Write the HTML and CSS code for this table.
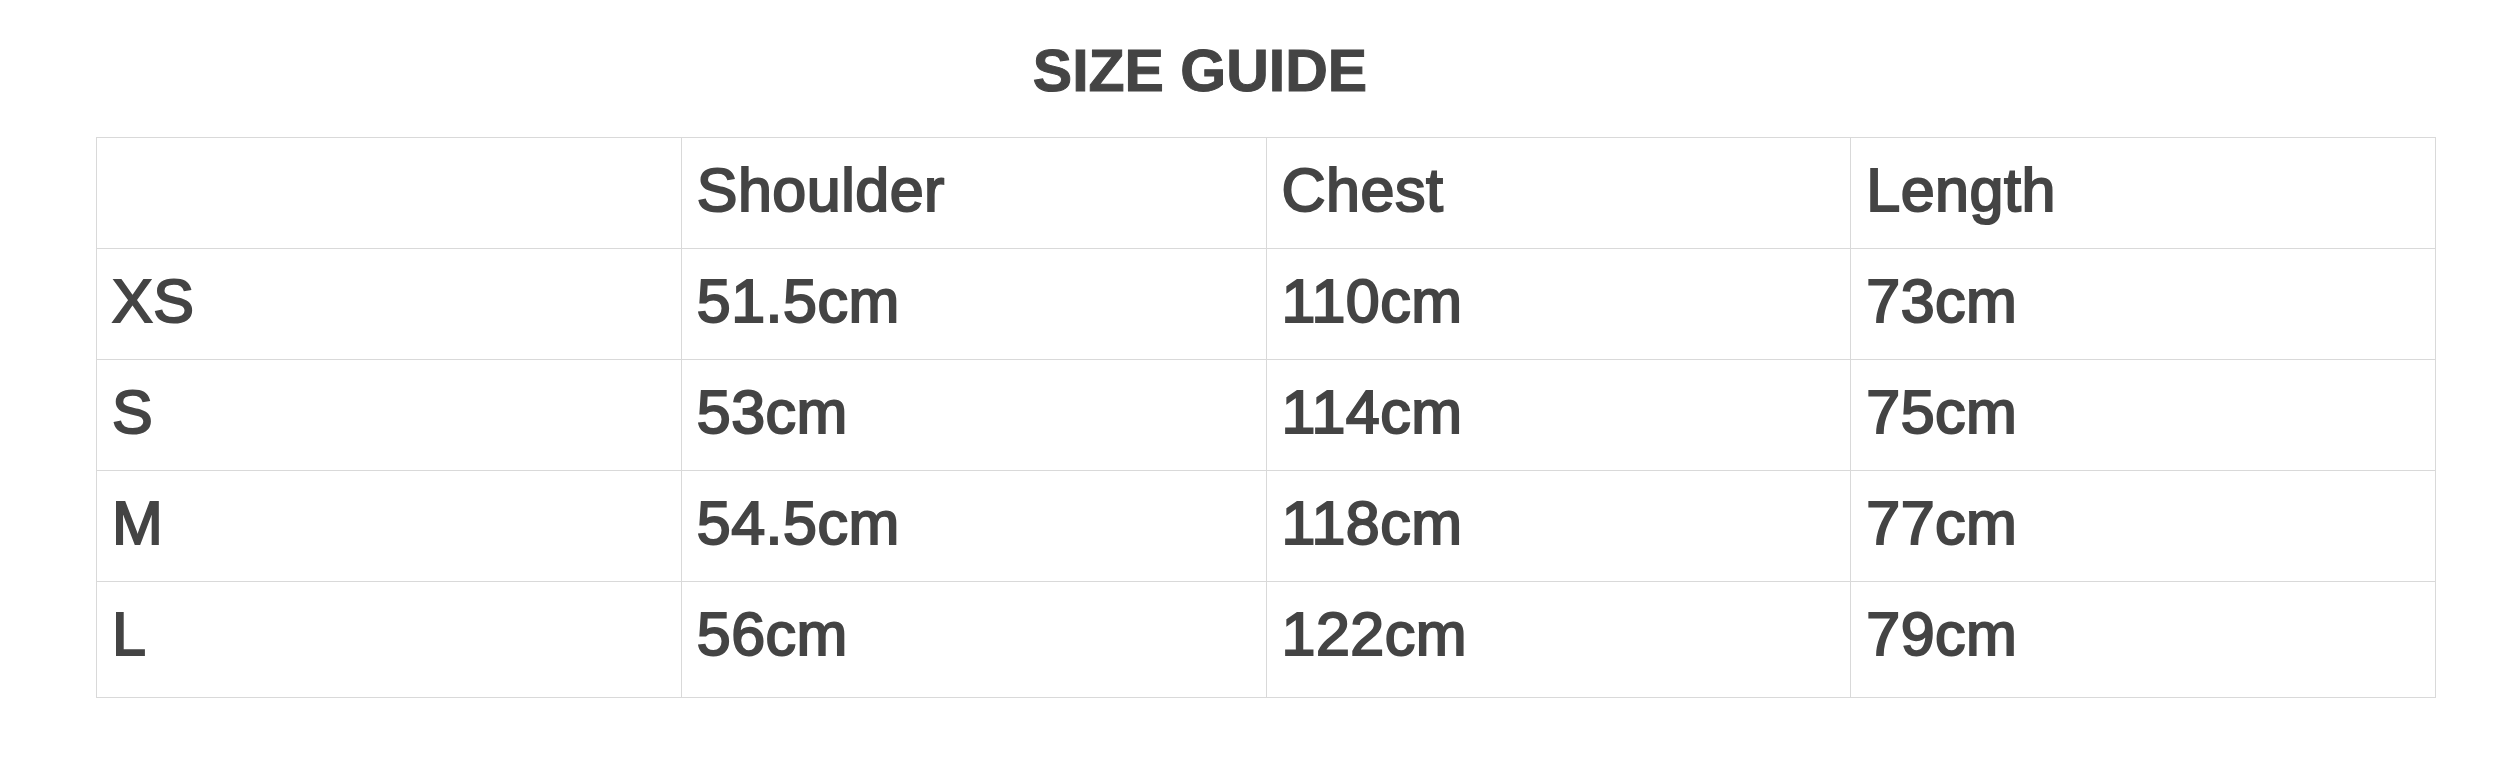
FILE: index.html
```html
<!DOCTYPE html>
<html lang="en">
<head>
<meta charset="utf-8">
<title>Size Guide</title>
<link rel="stylesheet" href="styles.css">
</head>
<body>
<div class="page">
  <h2 class="title">SIZE GUIDE</h2>
  <table class="sizes">
    <thead>
      <tr><th></th><th>Shoulder</th><th>Chest</th><th>Length</th></tr>
    </thead>
    <tbody>
      <tr><td>XS</td><td>51.5cm</td><td>110cm</td><td>73cm</td></tr>
      <tr><td>S</td><td>53cm</td><td>114cm</td><td>75cm</td></tr>
      <tr><td>M</td><td>54.5cm</td><td>118cm</td><td>77cm</td></tr>
      <tr class="last"><td>L</td><td>56cm</td><td>122cm</td><td>79cm</td></tr>
    </tbody>
  </table>
</div>
</body>
</html>
```

FILE: styles.css
```css
html, body {
  margin: 0;
  padding: 0;
  background: #ffffff;
}

.page {
  padding: 37px 79px 0 96px;
  font-family: "Liberation Sans", Arial, Helvetica, sans-serif;
  color: #444444;
}

.title {
  margin: 0 0 32px 0;
  padding-right: 132px;
  text-align: center;
  font-size: 59px;
  line-height: 68px;
  font-weight: 700;
  -webkit-text-stroke: 1px #444444;
}

.sizes {
  width: 2340px;
  border-collapse: collapse;
  table-layout: fixed;
}

.sizes th,
.sizes td {
  width: 25%;
  border: 1px solid #d9d9d9;
  padding: 17px 15px 23px 15px;
  text-align: left;
  vertical-align: top;
  font-size: 61px;
  line-height: 70px;
  font-weight: 400;
  letter-spacing: 0.5px;
  -webkit-text-stroke: 2px #444444;
  color: #444444;
}

.sizes tr.last td {
  padding-bottom: 28px;
}
```
